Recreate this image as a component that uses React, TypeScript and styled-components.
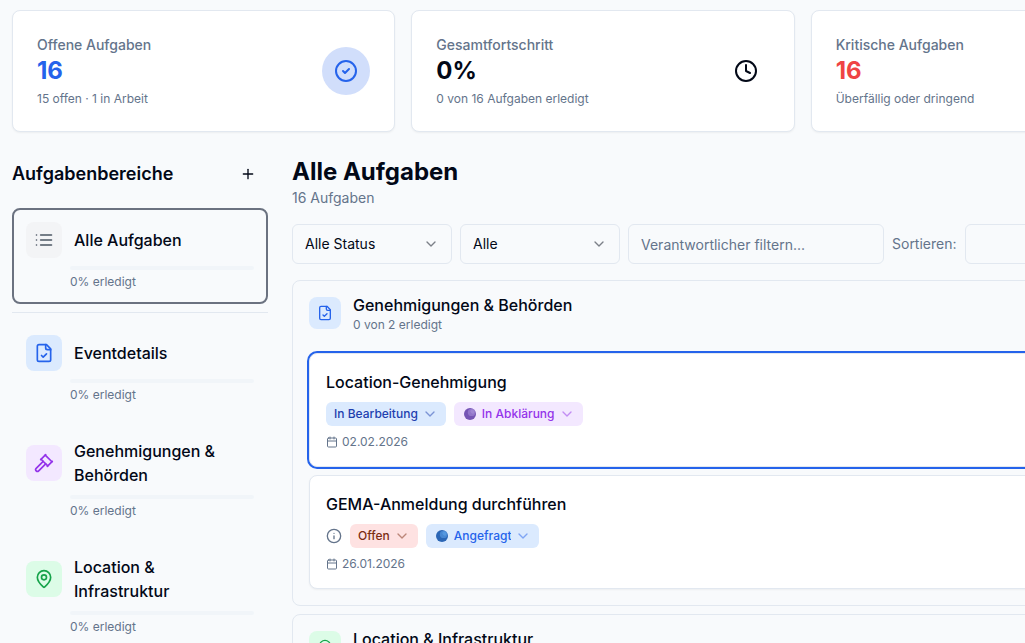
import React from "react";
import styled, { createGlobalStyle, css } from "styled-components";
import {
  Calendar,
  ChevronDown,
  CircleAlert,
  CircleCheck,
  Clock,
  Gavel,
  Info,
  MapPin,
  Plus,
} from "lucide-react";

const color = {
  page: "#f8fafc",
  card: "#ffffff",
  text: "#020817",
  muted: "#64748b",
  border: "#e2e8f0",
  track: "#f1f5f9",
  primary: "#2563eb",
  danger: "#ef4444",
};

const GlobalStyle = createGlobalStyle`
  *, *::before, *::after { box-sizing: border-box; }
  body {
    margin: 0;
    background: ${color.page};
    color: ${color.text};
    font-family: Inter, "Liberation Sans", sans-serif;
    font-size: 16px;
    line-height: 24px;
  }
  h1, h2, h3, p, ul { margin: 0; padding: 0; }
  ul { list-style: none; }
  button, input, select { font: inherit; color: inherit; }
  svg { display: block; flex: none; }
`;

const Viewport = styled.div`
  height: 100vh;
  overflow: hidden;
`;

const Page = styled.div`
  display: flex;
  flex-direction: column;
  gap: 24px;
  min-width: 1206px;
  padding: 10px 12px;
`;

/* ---------- Summary cards ---------- */

const Stats = styled.section`
  display: grid;
  grid-template-columns: repeat(3, 1fr);
  gap: 16px;
`;

const StatCard = styled.article`
  display: flex;
  align-items: center;
  justify-content: space-between;
  padding: 24px;
  background: ${color.card};
  border: 1px solid ${color.border};
  border-radius: 8px;
  box-shadow: 0 1px 2px rgba(0, 0, 0, 0.05);
`;

const StatLabel = styled.p`
  font-size: 14px;
  line-height: 20px;
  font-weight: 500;
  color: ${color.muted};
`;

const StatValue = styled.p<{ $color: string }>`
  font-size: 24px;
  line-height: 32px;
  font-weight: 700;
  color: ${(p) => p.$color};
`;

const SmallText = styled.p`
  font-size: 12px;
  line-height: 16px;
  color: ${color.muted};
`;

const StatNote = styled(SmallText)`
  margin-top: 4px;
`;

const StatIcon = styled.div<{ $color: string; $background: string }>`
  display: grid;
  place-items: center;
  width: 48px;
  height: 48px;
  border-radius: 50%;
  color: ${(p) => p.$color};
  background: ${(p) => p.$background};
`;

/* ---------- Sidebar ---------- */

const Columns = styled.div`
  display: flex;
  align-items: flex-start;
  gap: 24px;
`;

const Sidebar = styled.aside`
  flex: none;
  width: 256px;
`;

const SidebarHeader = styled.div`
  display: flex;
  align-items: center;
  justify-content: space-between;
  margin-bottom: 16px;
`;

const SidebarTitle = styled.h2`
  font-size: 18px;
  line-height: 28px;
  font-weight: 600;
`;

const AddButton = styled.button`
  display: grid;
  place-items: center;
  width: 40px;
  height: 36px;
  border: 0;
  border-radius: 6px;
  background: transparent;
  cursor: pointer;
`;

const AreaList = styled.ul`
  display: flex;
  flex-direction: column;
  gap: 8px;
`;

const Divider = styled.li`
  height: 1px;
  background: ${color.border};
`;

const AreaButton = styled.button<{ $active: boolean }>`
  display: block;
  width: 100%;
  padding: 12px;
  border: 2px solid ${(p) => (p.$active ? "#6b7280" : "transparent")};
  border-radius: 8px;
  background: transparent;
  text-align: left;
  cursor: pointer;
`;

const AreaHead = styled.span`
  display: flex;
  align-items: center;
  gap: 12px;
  font-weight: 500;
`;

const tones = {
  gray: css`
    color: #4b5563;
    background: #f3f4f6;
  `,
  blue: css`
    color: #2563eb;
    background: #dbeafe;
  `,
  purple: css`
    color: #9333ea;
    background: #f3e8ff;
  `,
  green: css`
    color: #16a34a;
    background: #dcfce7;
  `,
};

type Tone = keyof typeof tones;

const IconTile = styled.span<{ $tone: Tone; $size: number }>`
  display: grid;
  place-items: center;
  flex: none;
  width: ${(p) => p.$size}px;
  height: ${(p) => p.$size}px;
  border-radius: 8px;
  ${(p) => tones[p.$tone]}
`;

const AreaProgress = styled.span`
  display: flex;
  flex-direction: column;
  gap: 4px;
  margin: 8px 0 0 44px;
  font-size: 12px;
  line-height: 16px;
  color: ${color.muted};
`;

const Track = styled.span`
  height: 4px;
  border-radius: 4px;
  background: ${color.track};
`;

/* ---------- Main column ---------- */

const Main = styled.main`
  flex: 1;
  min-width: 0;
  display: flex;
  flex-direction: column;
  gap: 16px;
`;

const Title = styled.h1`
  font-size: 24px;
  line-height: 32px;
  font-weight: 700;
`;

const Count = styled.p`
  font-size: 14px;
  line-height: 20px;
  color: ${color.muted};
`;

const Filters = styled.div`
  display: flex;
  align-items: center;
  gap: 8px;
  font-size: 14px;
  line-height: 20px;
`;

const SelectWrap = styled.span`
  display: inline-grid;
  align-items: center;

  & > * {
    grid-area: 1 / 1;
  }
  & > svg {
    pointer-events: none;
  }
`;

const Chevron = styled(ChevronDown).attrs({ size: 16 })<{ $inset: number }>`
  justify-self: end;
  margin-right: ${(p) => p.$inset}px;
  opacity: 0.5;
`;

const FilterSelect = styled.select`
  appearance: none;
  width: 160px;
  height: 40px;
  padding: 0 36px 0 12px;
  border: 1px solid ${color.border};
  border-radius: 6px;
  background: ${color.page};
`;

const FilterInput = styled.input`
  width: 256px;
  height: 40px;
  padding: 0 12px;
  border: 1px solid ${color.border};
  border-radius: 6px;
  background: ${color.page};

  &::placeholder {
    color: ${color.muted};
    opacity: 1;
  }
`;

const SortLabel = styled.label`
  color: ${color.muted};
`;

const Groups = styled.div`
  display: flex;
  flex-direction: column;
  gap: 8px;
`;

const Group = styled.section`
  border: 1px solid ${color.border};
  border-radius: 8px;
`;

const GroupHeader = styled.header`
  display: flex;
  align-items: center;
  gap: 12px;
  padding: 12px 16px;
`;

const GroupTitle = styled.h2`
  font-size: 16px;
  line-height: 24px;
  font-weight: 500;
`;

const TaskList = styled.ul`
  display: flex;
  flex-direction: column;
  gap: 8px;
  padding: 8px 16px 16px;
`;

const TaskCard = styled.li<{ $selected: boolean }>`
  display: flex;
  flex-direction: column;
  gap: 8px;
  padding: 16px;
  background: ${color.card};
  border: 1px solid ${color.border};
  border-radius: 8px;
  box-shadow: ${(p) =>
    p.$selected ? `0 0 0 2px ${color.primary}` : "0 1px 2px rgba(0, 0, 0, 0.05)"};
`;

const TaskTitle = styled.h3`
  font-size: 16px;
  line-height: 24px;
  font-weight: 500;
`;

const Badges = styled.div`
  display: flex;
  align-items: center;
  gap: 8px;
  color: ${color.muted};
`;

const badgeTones = {
  progress: css`
    color: #1e40af;
    background: #dbeafe;
  `,
  clarify: css`
    color: #9333ea;
    background: #f3e8ff;
  `,
  open: css`
    color: #7c2d12;
    background: #fee2e2;
  `,
  asked: css`
    color: #2563eb;
    background: #dbeafe;
  `,
};

type BadgeTone = keyof typeof badgeTones;

const BadgeWrap = styled(SelectWrap)<{ $tone: BadgeTone }>`
  height: 24px;
  border-radius: 6px;
  ${(p) => badgeTones[p.$tone]}
`;

const BadgeSelect = styled.select<{ $dot: boolean }>`
  appearance: none;
  field-sizing: content;
  height: 24px;
  padding: 0 28px 0 ${(p) => (p.$dot ? 28 : 8)}px;
  border: 0;
  border-radius: 6px;
  background: transparent;
  font-size: 12px;
  line-height: 16px;
  font-weight: 500;
`;

const DotSvg = styled.svg`
  margin-left: 10px;
`;

const DueDate = styled(SmallText)`
  display: flex;
  align-items: center;
  gap: 4px;
`;

/* ---------- Icons ---------- */

const strokeProps = {
  viewBox: "0 0 24 24",
  fill: "none",
  stroke: "currentColor",
  strokeWidth: 2,
  strokeLinecap: "round" as const,
  strokeLinejoin: "round" as const,
};

const ListIcon = ({ size = 20 }: { size?: number }) => (
  <svg width={size} height={size} {...strokeProps}>
    <path d="M8 6h13M8 12h13M8 18h13M3 6h.01M3 12h.01M3 18h.01" />
  </svg>
);

const FileCheckIcon = ({ size = 20 }: { size?: number }) => (
  <svg width={size} height={size} {...strokeProps}>
    <path d="M15 2H6a2 2 0 0 0-2 2v16a2 2 0 0 0 2 2h12a2 2 0 0 0 2-2V7Z" />
    <path d="M14 2v4a2 2 0 0 0 2 2h4" />
    <path d="m9 15 2 2 4-4" />
  </svg>
);

const Dot = ({ base, light }: { base: string; light: string }) => (
  <DotSvg width="12" height="12" viewBox="0 0 12 12" aria-hidden="true">
    <circle cx="6" cy="6" r="6" fill={base} />
    <ellipse cx="7.6" cy="4.4" rx="3.8" ry="3.6" fill={light} opacity="0.55" />
    <ellipse cx="8.4" cy="3.6" rx="2.2" ry="1.8" fill={light} opacity="0.6" transform="rotate(45 8.4 3.6)" />
  </DotSvg>
);

/* ---------- Data ---------- */

const stats = [
  {
    label: "Offene Aufgaben",
    value: "16",
    note: "15 offen · 1 in Arbeit",
    tint: color.primary,
    tile: "#d1defb",
    icon: <CircleCheck size={24} />,
  },
  {
    label: "Gesamtfortschritt",
    value: "0%",
    note: "0 von 16 Aufgaben erledigt",
    tint: color.text,
    tile: "transparent",
    icon: <Clock size={24} />,
  },
  {
    label: "Kritische Aufgaben",
    value: "16",
    note: "Überfällig oder dringend",
    tint: color.danger,
    tile: "#fddada",
    icon: <CircleAlert size={24} />,
  },
];

const areas: { name: string; tone: Tone; icon: React.ReactNode }[] = [
  { name: "Eventdetails", tone: "blue", icon: <FileCheckIcon /> },
  { name: "Genehmigungen & Behörden", tone: "purple", icon: <Gavel size={20} /> },
  { name: "Location & Infrastruktur", tone: "green", icon: <MapPin size={20} /> },
];

/* ---------- Components ---------- */

type AreaProps = { name: string; tone: Tone; icon: React.ReactNode; active?: boolean };

const Area = ({ name, tone, icon, active = false }: AreaProps) => (
  <li>
    <AreaButton type="button" $active={active} aria-pressed={active}>
      <AreaHead>
        <IconTile $tone={tone} $size={36}>
          {icon}
        </IconTile>
        {name}
      </AreaHead>
      <AreaProgress>
        <Track />
        0% erledigt
      </AreaProgress>
    </AreaButton>
  </li>
);

type BadgeProps = { label: string; value: string; tone: BadgeTone; dot?: React.ReactNode };

const Badge = ({ label, value, tone, dot }: BadgeProps) => (
  <BadgeWrap $tone={tone}>
    <BadgeSelect $dot={Boolean(dot)} aria-label={label}>
      <option>{value}</option>
    </BadgeSelect>
    {dot}
    <Chevron $inset={8} />
  </BadgeWrap>
);

const Filter = ({ label, value }: { label: string; value: string }) => (
  <SelectWrap>
    <FilterSelect aria-label={label}>
      <option>{value}</option>
    </FilterSelect>
    <Chevron $inset={13} />
  </SelectWrap>
);

type TaskProps = {
  title: string;
  due: string;
  selected?: boolean;
  children: React.ReactNode;
};

const Task = ({ title, due, selected = false, children }: TaskProps) => (
  <TaskCard $selected={selected}>
    <TaskTitle>{title}</TaskTitle>
    <Badges>{children}</Badges>
    <DueDate>
      <Calendar size={12} />
      {due}
    </DueDate>
  </TaskCard>
);

export default function App() {
  return (
    <Viewport>
      <GlobalStyle />
      <Page>
        <Stats>
          {stats.map((s) => (
            <StatCard key={s.label}>
              <div>
                <StatLabel>{s.label}</StatLabel>
                <StatValue $color={s.tint}>{s.value}</StatValue>
                <StatNote>{s.note}</StatNote>
              </div>
              <StatIcon $color={s.tint} $background={s.tile}>
                {s.icon}
              </StatIcon>
            </StatCard>
          ))}
        </Stats>

        <Columns>
          <Sidebar>
            <SidebarHeader>
              <SidebarTitle>Aufgabenbereiche</SidebarTitle>
              <AddButton type="button" aria-label="Bereich hinzufügen">
                <Plus size={16} />
              </AddButton>
            </SidebarHeader>
            <AreaList>
              <Area name="Alle Aufgaben" tone="gray" icon={<ListIcon />} active />
              <Divider role="separator" />
              {areas.map((a) => (
                <Area key={a.name} {...a} />
              ))}
            </AreaList>
          </Sidebar>

          <Main>
            <div>
              <Title>Alle Aufgaben</Title>
              <Count>16 Aufgaben</Count>
            </div>

            <Filters>
              <Filter label="Status" value="Alle Status" />
              <Filter label="Priorität" value="Alle" />
              <FilterInput
                type="text"
                aria-label="Verantwortlicher"
                placeholder="Verantwortlicher filtern..."
              />
              <SortLabel htmlFor="sort">Sortieren:</SortLabel>
              <SelectWrap>
                <FilterSelect id="sort" />
                <Chevron $inset={13} />
              </SelectWrap>
            </Filters>

            <Groups>
              <Group>
                <GroupHeader>
                  <IconTile $tone="blue" $size={32}>
                    <FileCheckIcon size={16} />
                  </IconTile>
                  <div>
                    <GroupTitle>Genehmigungen &amp; Behörden</GroupTitle>
                    <SmallText>0 von 2 erledigt</SmallText>
                  </div>
                </GroupHeader>
                <TaskList>
                  <Task title="Location-Genehmigung" due="02.02.2026" selected>
                    <Badge label="Status" value="In Bearbeitung" tone="progress" />
                    <Badge
                      label="Klärung"
                      value="In Abklärung"
                      tone="clarify"
                      dot={<Dot base="#7554b5" light="#a98fda" />}
                    />
                  </Task>
                  <Task title="GEMA-Anmeldung durchführen" due="26.01.2026">
                    <Info size={16} />
                    <Badge label="Status" value="Offen" tone="open" />
                    <Badge
                      label="Klärung"
                      value="Angefragt"
                      tone="asked"
                      dot={<Dot base="#2b66b5" light="#5fa3ea" />}
                    />
                  </Task>
                </TaskList>
              </Group>

              <Group>
                <GroupHeader>
                  <IconTile $tone="green" $size={32}>
                    <MapPin size={16} />
                  </IconTile>
                  <div>
                    <GroupTitle>Location &amp; Infrastruktur</GroupTitle>
                    <SmallText>0 von 2 erledigt</SmallText>
                  </div>
                </GroupHeader>
              </Group>
            </Groups>
          </Main>
        </Columns>
      </Page>
    </Viewport>
  );
}
